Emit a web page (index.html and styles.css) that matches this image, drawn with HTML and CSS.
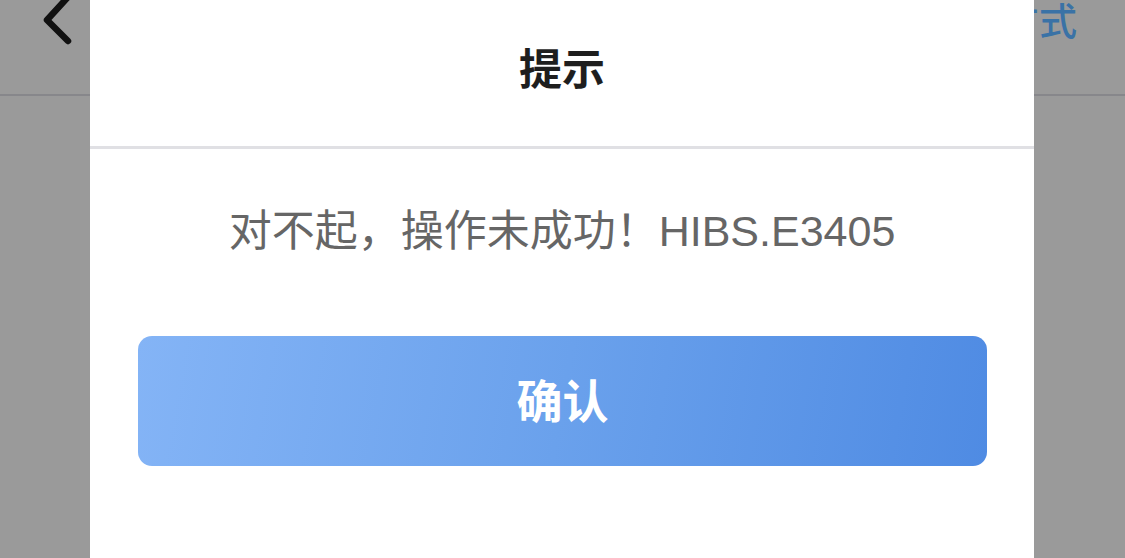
FILE: index.html
```html
<!DOCTYPE html>
<html lang="zh">
<head>
<meta charset="utf-8">
<link rel="stylesheet" href="styles.css">
</head>
<body>
<div class="page">
  <header class="navbar">
    <svg class="back" width="40" height="50" viewBox="0 0 40 50">
      <path d="M30 -3 L9 20 L30 41" fill="none" stroke="#111" stroke-width="6.5" stroke-linecap="round" stroke-linejoin="round"/>
    </svg>
    <span class="nav-right">方式</span>
  </header>
  <main class="content"></main>
  <div class="dialog">
    <div class="dialog-title">提示</div>
    <div class="dialog-msg">对不起，操作未成功！HIBS.E3405</div>
    <div class="dialog-actions">
      <button class="btn-confirm">确认</button>
    </div>
  </div>
</div>
</body>
</html>
```
FILE: styles.css
```css
* { box-sizing: border-box; }
html, body { margin: 0; padding: 0; }
body {
  width: 1125px;
  height: 558px;
  overflow: hidden;
  background: #9a9a9a;
  font-family: "Noto Sans CJK SC", "Noto Sans", sans-serif;
}
.page {
  position: relative;
  width: 1125px;
  height: 558px;
  display: flex;
  flex-direction: column;
}
.navbar {
  height: 96px;
  border-bottom: 2px solid #87878b;
  display: flex;
  justify-content: space-between;
  align-items: flex-start;
  padding: 0 48px 0 38px;
  overflow: hidden;
}
.back { display: block; margin-top: 0; }
.nav-right {
  font-size: 38px;
  line-height: 38px;
  margin-top: 0;
  color: #3a72a6;
  font-weight: 500;
}
.content { flex: 1; }
.dialog {
  position: absolute;
  left: 90px;
  top: 0;
  width: 944px;
  bottom: 0;
  background: #ffffff;
  display: flex;
  flex-direction: column;
}
.dialog-title {
  height: 149px;
  border-bottom: 3px solid #e0e0e4;
  display: flex;
  justify-content: center;
  align-items: center;
  padding-bottom: 14px;
  font-size: 43px;
  font-weight: 600;
  color: #1e1e1e;
}
.dialog-msg {
  height: 187px;
  display: flex;
  justify-content: center;
  align-items: center;
  padding-bottom: 32px;
  font-family: "Liberation Sans", "Noto Sans CJK SC", sans-serif;
  font-size: 43px;
  color: #666666;
}
.dialog-actions {
  padding: 0 47px 0 48px;
}
.btn-confirm {
  width: 100%;
  height: 130px;
  border: none;
  border-radius: 14px;
  background: linear-gradient(100deg, #84b4f6 0%, #6aa1ec 50%, #4f8be3 100%);
  color: #ffffff;
  font-family: "Noto Sans CJK SC", "Noto Sans", sans-serif;
  font-size: 46px;
  font-weight: 600;
  padding: 0 0 6px 0;
}
```
